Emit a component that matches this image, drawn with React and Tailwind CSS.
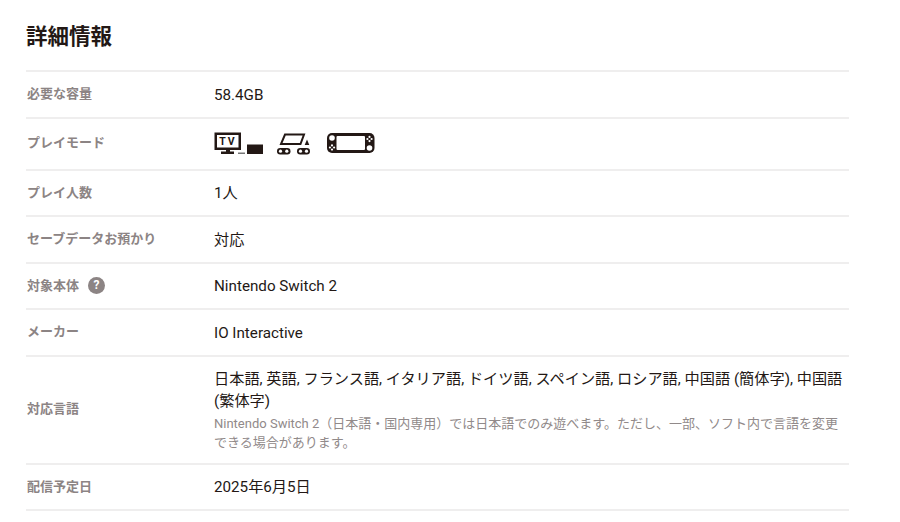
import React from 'react';

const Row = ({ label, className = 'h-[46.5px]', children }) => (
  <div className={`flex items-center border-b-2 border-[#efeeee] ${className}`}>
    <div className="w-[188px] shrink-0 pl-px pb-px text-[13px] font-bold text-[#8c8484] flex items-center gap-[9px]">{label}</div>
    <div className="flex-1 pt-px text-[15.2px] text-[#231815] leading-[22px]">{children}</div>
  </div>
);

const TvIcon = () => (
  <svg width="49" height="24" viewBox="0 0 49 24" fill="#231815">
    <path fillRule="evenodd" d="M0.5 0.5h26.5v17.5h-26.5zM3 3v12.5h21.5v-12.5z" />
    <path d="M12 18h4v2h-4zM7 19.5h13v2.5h-13z" />
    <path d="M33 12.5h16v9.5h-16z" />
    <path d="M24 20.5h7v1.5h-7z" fill="#777" />
    <text x="14" y="13.4" textAnchor="middle" fontSize="10.5" fontWeight="700" letterSpacing="2" fontFamily="Roboto, sans-serif">TV</text>
  </svg>
);

const TabletopIcon = () => (
  <svg width="33" height="22" viewBox="0 0 33 22" fill="none">
    <path d="M8 1.5h19l-3.5 9.5h-19.5z" stroke="#231815" strokeWidth="2" />
    <path d="M30 6.5l2.3 5.5h-4.6z" fill="#231815" />
    <rect x="0" y="15" width="13.5" height="6.5" rx="3.2" fill="#231815" />
    <rect x="20" y="15" width="13" height="6.5" rx="3.2" fill="#231815" />
    <circle cx="3.5" cy="18.2" r="1.6" fill="#fff" />
    <circle cx="9.8" cy="18.2" r="1.6" fill="#fff" />
    <circle cx="23.5" cy="18.2" r="1.6" fill="#fff" />
    <circle cx="29.5" cy="18.2" r="1.6" fill="#fff" />
  </svg>
);

const HandheldIcon = () => (
  <svg width="48" height="22" viewBox="0 0 48 22">
    <rect width="47.5" height="20" rx="5" fill="#231815" />
    <rect x="9.5" y="3" width="28.5" height="14" rx="1" fill="#fff" />
    <circle cx="5" cy="5" r="2.8" fill="#fff" />
    <circle cx="5" cy="12.4" r="1.1" fill="#fff" />
    <circle cx="2.9" cy="14.5" r="1.1" fill="#fff" />
    <circle cx="7.1" cy="14.5" r="1.1" fill="#fff" />
    <circle cx="5" cy="16.6" r="1.1" fill="#fff" />
    <circle cx="42.5" cy="3.9" r="1.1" fill="#fff" />
    <circle cx="40.4" cy="6" r="1.1" fill="#fff" />
    <circle cx="44.6" cy="6" r="1.1" fill="#fff" />
    <circle cx="42.5" cy="8.1" r="1.1" fill="#fff" />
    <circle cx="42.5" cy="15" r="2.8" fill="#fff" />
  </svg>
);

export default function App() {
  return (
    <div
      className="bg-white h-[522px] w-[900px] overflow-hidden pl-[26px] pr-[51px] pt-[20px]"
      style={{ fontFamily: 'Roboto, "Noto Sans CJK JP", sans-serif' }}
    >
      <h2 className="text-[21.5px] font-bold text-[#231815] leading-[34px] h-[50px] border-b-2 border-[#efeeee] box-content">
        詳細情報
      </h2>
      <Row label="必要な容量">58.4GB</Row>
      <Row label="プレイモード" className="h-[52px]">
        <div className="flex items-center -mt-px">
          <TvIcon />
          <div className="ml-[14px]"><TabletopIcon /></div>
          <div className="ml-[17px]"><HandheldIcon /></div>
        </div>
      </Row>
      <Row label="プレイ人数">1人</Row>
      <Row label="セーブデータお預かり">対応</Row>
      <Row
        label={
          <>
            対象本体
            <span className="w-[17px] h-[17px] rounded-full bg-[#8c8484] text-white text-[12px] font-bold flex items-center justify-center">?</span>
          </>
        }
      >
        Nintendo Switch 2
      </Row>
      <Row label="メーカー">IO Interactive</Row>
      <Row label="対応言語" className="h-[108px]">
        <p>日本語, 英語, フランス語, イタリア語, ドイツ語, スペイン語, ロシア語, 中国語 (簡体字), 中国語 (繁体字)</p>
        <p className="text-[13px] leading-[19px] text-[#918a8a] mt-[2px]">
          Nintendo Switch 2（日本語・国内専用）では日本語でのみ遊べます。ただし、一部、ソフト内で言語を変更できる場合があります。
        </p>
      </Row>
      <Row label="配信予定日">2025年6月5日</Row>
    </div>
  );
}
